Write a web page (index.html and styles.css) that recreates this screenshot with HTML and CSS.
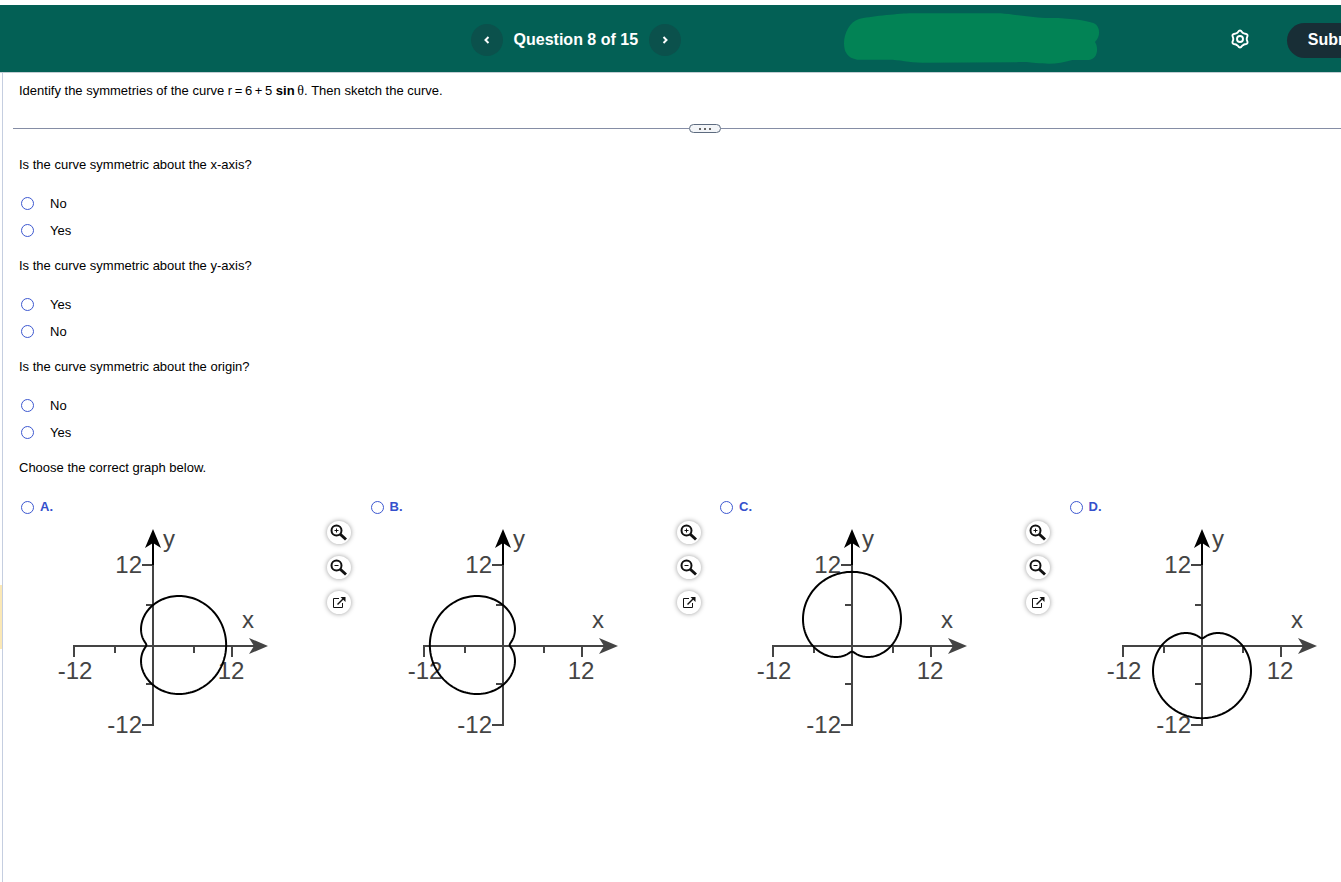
FILE: index.html
```html
<!DOCTYPE html>
<html lang="en">
<head>
    <meta charset="UTF-8">
    <meta name="viewport" content="width=device-width, initial-scale=1.0">
    <title>Question 8 of 15</title>
    <link rel="stylesheet" href="styles.css">
</head>
<body>
    <header class="topbar">
        <nav class="question-nav">
            <button class="nav-btn" type="button" aria-label="Previous question">
                <svg width="6" height="8" viewBox="0 0 6 8"><path d="M4.5 1 1.5 4l3 3"/></svg>
            </button>
            <h1 class="question-count">Question 8 of 15</h1>
            <button class="nav-btn" type="button" aria-label="Next question">
                <svg width="6" height="8" viewBox="0 0 6 8"><path d="M1.5 1l3 3-3 3"/></svg>
            </button>
        </nav>
        <svg class="marker" width="256" height="51" viewBox="45 39 768 153" aria-hidden="true">
            <path d="M45 130C45 100 62 65 90 57C120 50 200 42 240 40L515 40C560 44 620 54 660 54C710 53 770 60 795 70C815 80 815 110 798 126C810 145 805 178 780 180L730 180C700 188 670 194 640 190C600 188 590 184 560 187L280 188C240 187 210 179 180 179L85 179C55 175 45 155 45 130Z"/>
        </svg>
        <div class="actions">
            <button class="settings-btn" type="button" aria-label="Settings">
                <svg width="20" height="20" viewBox="0 0 24 24">
                    <path d="M7.9 4.900C9.800 4.900 9.500 1.800 12 1.800C14.500 1.800 14.200 4.900 16.100 4.900C17.050 6.540 19.580 4.730 20.830 6.900C22.080 9.060 19.250 10.360 20.200 12C19.250 13.640 22.080 14.940 20.830 17.100C19.580 19.270 17.050 17.460 16.100 19.100C14.200 19.100 14.500 22.200 12 22.200C9.500 22.200 9.800 19.100 7.900 19.100C6.950 17.460 4.420 19.270 3.170 17.100C1.920 14.940 4.750 13.640 3.800 12C4.750 10.360 1.920 9.060 3.170 6.900C4.420 4.730 6.950 6.540 7.900 4.900Z"/>
                    <circle cx="12" cy="12" r="3.6"/>
                </svg>
            </button>
            <button class="submit-btn" type="button">Submit</button>
        </div>
    </header>

    <main class="page">
        <div class="side-tab"></div>
        <p class="prompt">Identify the symmetries of the curve r&thinsp;=&thinsp;6&thinsp;+&thinsp;5 <b>sin</b>&thinsp;<span class="theta">θ</span>. Then sketch the curve.</p>

        <div class="divider">
            <button class="divider-btn" type="button" aria-label="Resize"><i></i><i></i><i></i></button>
        </div>

        <form class="questions">
            <fieldset class="question">
                <legend>Is the curve symmetric about the x-axis?</legend>
                <label class="option"><input type="radio" name="x-axis">No</label>
                <label class="option"><input type="radio" name="x-axis">Yes</label>
            </fieldset>
            <fieldset class="question">
                <legend>Is the curve symmetric about the y-axis?</legend>
                <label class="option"><input type="radio" name="y-axis">Yes</label>
                <label class="option"><input type="radio" name="y-axis">No</label>
            </fieldset>
            <fieldset class="question">
                <legend>Is the curve symmetric about the origin?</legend>
                <label class="option"><input type="radio" name="origin">No</label>
                <label class="option"><input type="radio" name="origin">Yes</label>
            </fieldset>
            <fieldset class="question">
                <legend>Choose the correct graph below.</legend>
                <div class="graphs" id="graphs"></div>
            </fieldset>
        </form>
    </main>

    <script src="script.js"></script>
</body>
</html>
```

FILE: styles.css
```css
* {
    box-sizing: border-box;
}
body {
    margin: 0;
    padding-top: 5px;
    min-height: 100vh;
    display: flex;
    flex-direction: column;
    overflow-x: hidden;
    background-color: #fff;
    font-family: Arial, "Liberation Sans", sans-serif;
    font-size: 13px;
    line-height: 16px;
    color: #000;
}
button {
    border: none;
    padding: 0;
    font-family: inherit;
    cursor: pointer;
}

/* top bar */
.topbar {
    display: grid;
    grid-template-columns: 471fr auto 163fr auto 130fr auto;
    align-items: center;
    height: 68px;
    margin-right: -42px;
    background-color: #036055;
    border-bottom: 1px solid #c3cdd3;
}
.question-nav {
    grid-column: 2;
    display: flex;
    align-items: center;
    gap: 11px;
    padding-top: 3px;
}
.nav-btn {
    display: flex;
    align-items: center;
    justify-content: center;
    width: 32px;
    height: 32px;
    border-radius: 50%;
    background-color: #0b514c;
}
.nav-btn svg {
    fill: none;
    stroke: #fff;
    stroke-width: 2;
}
.question-count {
    margin: 0;
    font-size: 16px;
    line-height: 20px;
    color: #fff;
}
.marker {
    grid-column: 4;
    fill: #028355;
}
.actions {
    grid-column: 6;
    display: flex;
    align-items: center;
    gap: 37px;
    padding-top: 3px;
}
.settings-btn {
    display: flex;
    padding-bottom: 3px;
    background: none;
}
.settings-btn svg {
    fill: none;
    stroke: #fff;
    stroke-width: 2.3;
}
.submit-btn {
    height: 35px;
    padding: 0 21px;
    border-radius: 18px;
    background-color: #182e36;
    color: #fff;
    font-size: 16px;
    font-weight: bold;
}

/* question area */
.page {
    position: relative;
    flex: 1;
    margin: 0 -76px 0 2px;
    padding: 10px 0 0 16px;
    border-left: 1px solid #c5cee0;
}
.side-tab {
    position: absolute;
    top: 512px;
    left: -3px;
    width: 2px;
    height: 64px;
    background-color: #fbe8b6;
}
.prompt {
    margin: 0;
}
.theta {
    font-family: "Liberation Serif", serif;
    font-size: 14px;
}
.divider {
    display: flex;
    align-items: center;
    height: 9px;
    margin: 25px 20px 24px -6px;
}
.divider::before,
.divider::after {
    content: "";
    flex: 1;
    height: 1px;
    background-color: #858da5;
}
.divider-btn {
    display: flex;
    align-items: center;
    justify-content: center;
    gap: 3px;
    width: 32px;
    height: 9px;
    border: 1px solid #5d6b7f;
    border-radius: 5px;
    background-color: #f3f5f8;
}
.divider-btn i {
    width: 2px;
    height: 2px;
    background-color: #666;
}
.question {
    min-width: 0;
    margin: 0 0 14px;
    padding: 0;
    border: none;
}
.question legend {
    padding: 0;
    margin-bottom: 17px;
}
.option {
    display: flex;
    align-items: center;
    gap: 16px;
    height: 27px;
    padding-left: 2px;
}
input[type="radio"] {
    appearance: none;
    width: 13px;
    height: 13px;
    margin: 0;
    border: 1px solid #3d58d0;
    border-radius: 50%;
    background-color: #fff;
}
input[type="radio"]:checked {
    background-color: #3d58d0;
    box-shadow: inset 0 0 0 2px #fff;
}

/* graph choices */
.graphs {
    display: grid;
    grid-template-columns: repeat(4, 1fr);
    padding-top: 6px;
}
.choice-label {
    display: flex;
    align-items: center;
    gap: 6px;
    padding-left: 2px;
    color: #3550cc;
    font-weight: bold;
}
.choice-body {
    display: flex;
    gap: 48px;
    padding: 5px 0 0 20px;
}
.plot {
    display: block;
    font-size: 24px;
}
.plot text {
    fill: #444;
}
.plot .axis {
    fill: none;
    stroke: #444;
    stroke-width: 2;
}
.plot .axis-top {
    stroke: #000;
    stroke-width: 2;
}
.plot .arrow {
    fill: #444;
}
.plot .curve {
    fill: none;
    stroke: #000;
    stroke-width: 2;
}
.tools {
    display: flex;
    flex-direction: column;
    gap: 12px;
    padding-top: 1px;
}
.tool-btn {
    display: flex;
    align-items: center;
    justify-content: center;
    width: 24px;
    height: 23px;
    border-radius: 50%;
    background-color: #fff;
    box-shadow: 0 0 5px rgba(0, 0, 0, 0.4);
}
.tool-btn svg {
    fill: none;
    stroke: #111;
}
```

FILE: script.js
```js
const SCALE = 6.65;

const graphs = [
    { name: 'A', r: t => 6 + 5 * Math.cos(t) },
    { name: 'B', r: t => 6 - 5 * Math.cos(t) },
    { name: 'C', r: t => 6 + 5 * Math.sin(t) },
    { name: 'D', r: t => 6 - 5 * Math.sin(t) }
];

const lens = '<circle cx="6.5" cy="6.5" r="5" stroke-width="2"/><path d="M10 10L16 15.5" stroke-width="3"/>';
const tools = [
    ['Zoom in', lens + '<path d="M4.5 6.5h4M6.5 4.5v4"/>'],
    ['Zoom out', lens + '<path d="M4.5 6.5h4"/>'],
    ['Open in new window', '<path d="M9 4.5H3.5v9h9V9"/><path d="M7.5 10.5L13 5" stroke-width="1.5"/><path d="M10.5 3h5v5z" fill="#111" stroke="none"/>']
];

// polar curve as an svg path, y grows downwards
function curvePath(r) {
    const points = [];
    for (let i = 0; i < 180; i++) {
        const t = i * Math.PI / 90;
        const x = r(t) * Math.cos(t) * SCALE;
        const y = -r(t) * Math.sin(t) * SCALE - 1;
        points.push(x.toFixed(2) + ' ' + y.toFixed(2));
    }
    return 'M' + points.join('L') + 'Z';
}

function plot(graph) {
    return `
        <svg class="plot" width="240" height="226" viewBox="-114 -126 240 226" role="img" aria-label="Graph ${graph.name}">
            <path class="axis" d="M-79 11V0H102M-38 0V7M41 0V7M79 0V11"/>
            <path class="axis" d="M0 -81V79M-11 -81H0M-7 -41H0M-7 38H0M-11 79H1"/>
            <path class="axis-top" d="M0 -103V-81"/>
            <path class="arrow" d="M115 0L96 -8L101 0L96 8Z"/>
            <path d="M0 -117L-8 -98L0 -103L8 -98Z"/>
            <text x="-11" y="-73" text-anchor="end">12</text>
            <text x="-11" y="87" text-anchor="end">-12</text>
            <text x="-78" y="33" text-anchor="middle">-12</text>
            <text x="78" y="33" text-anchor="middle">12</text>
            <text x="10" y="-99">y</text>
            <text x="89" y="-18">x</text>
            <path class="curve" d="${curvePath(graph.r)}"/>
        </svg>`;
}

document.getElementById('graphs').innerHTML = graphs.map(graph => `
    <div class="choice">
        <label class="choice-label"><input type="radio" name="graph">${graph.name}.</label>
        <div class="choice-body">
            ${plot(graph)}
            <div class="tools">
                ${tools.map(([label, icon]) => `<button class="tool-btn" type="button" aria-label="${label}"><svg width="18" height="18" viewBox="0 0 18 18">${icon}</svg></button>`).join('')}
            </div>
        </div>
    </div>`).join('');
```
